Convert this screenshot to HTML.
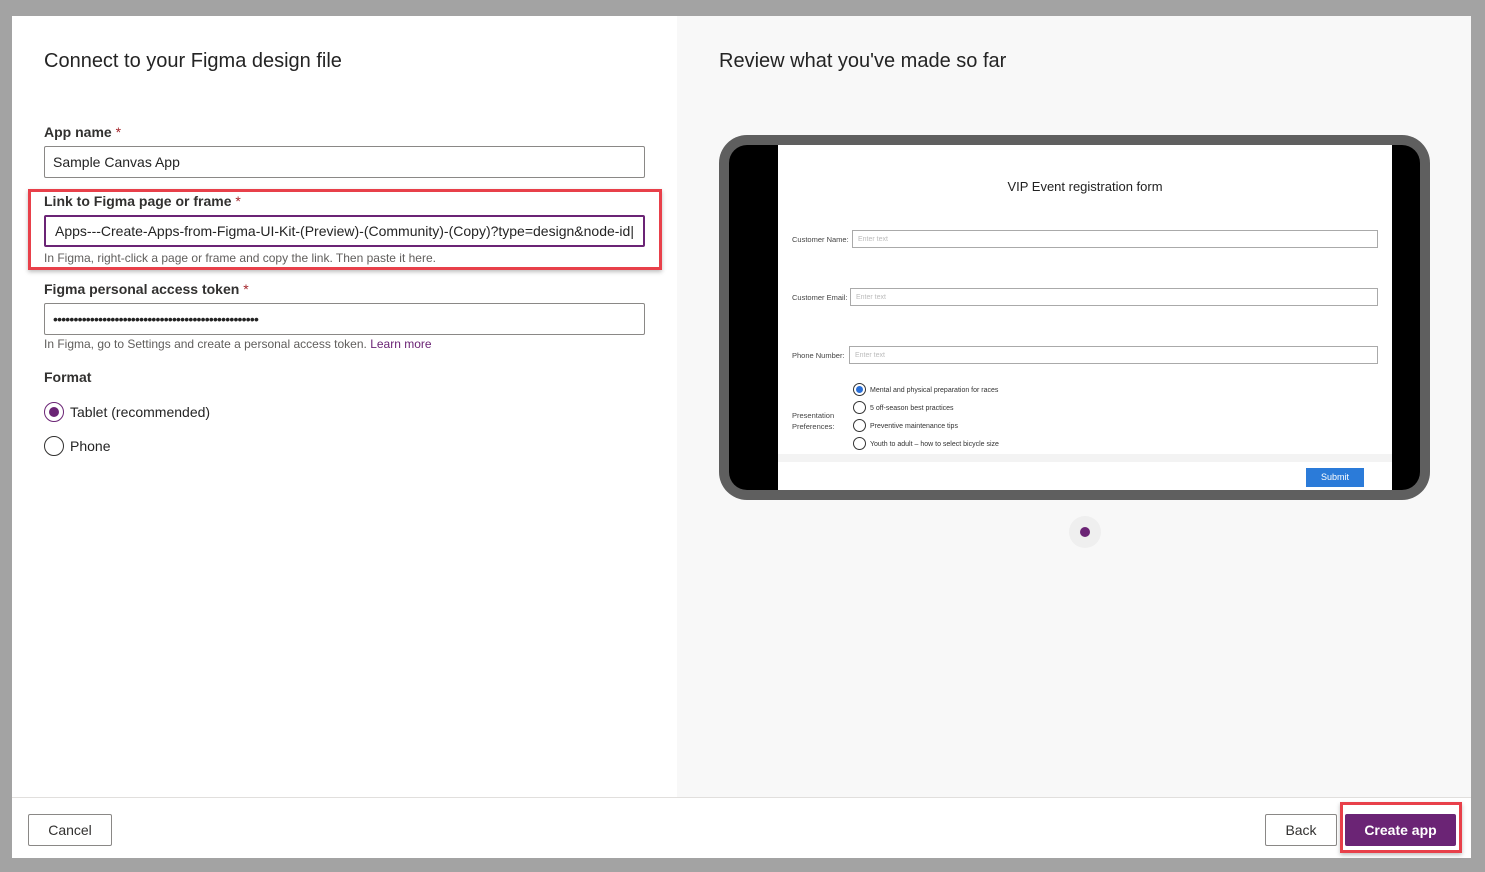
<!DOCTYPE html>
<html><head><style>
*{box-sizing:border-box;margin:0;padding:0}
body{width:1485px;height:872px;background:#a3a3a3;font-family:"Liberation Sans",sans-serif;position:relative;overflow:hidden;color:#242424}
.a{position:absolute}
.lbl{font-size:14px;font-weight:bold;color:#323130}
.lbl span{color:#a4262c;font-weight:normal}
.inp{border:1px solid #8a8886;border-radius:2px;height:32px;font-size:14px;padding:0 8px;line-height:30px;background:#fff;white-space:nowrap;overflow:hidden}
.hint{font-size:12px;color:#605e5c}
.sl{font-size:7.5px;color:#444}
.si{border:1px solid #aaa;height:18px;font-size:7px;color:#bbb;padding-left:5px;line-height:17px;background:#fff}
.rad{width:13px;height:13px;border:1px solid #333;border-radius:50%;background:#fff}
.ro{font-size:7px;color:#333}
</style></head><body>
<div class="a" style="left:12px;top:16px;width:1459px;height:842px;background:#fff"></div>
<div class="a" style="left:677px;top:16px;width:794px;height:781px;background:#f8f8f8"></div>
<div class="a" style="left:12px;top:797px;width:1459px;height:1px;background:#e1dfdd"></div>

<div class="a" style="left:44px;top:50px;font-size:20px;color:#242424">Connect to your Figma design file</div>
<div class="a" style="left:719px;top:50px;font-size:20px;color:#242424">Review what you've made so far</div>

<div class="a lbl" style="left:44px;top:124px">App name <span>*</span></div>
<div class="a inp" style="left:44px;top:146px;width:601px">Sample Canvas App</div>

<div class="a" style="left:28px;top:189px;width:634px;height:81px;border:3px solid #e8404a;box-shadow:0 2px 4px rgba(0,0,0,.25)"></div>
<div class="a lbl" style="left:44px;top:193px">Link to Figma page or frame <span>*</span></div>
<div class="a inp" style="left:44px;top:215px;width:601px;border:2px solid #6b2475;line-height:29px;padding-left:9px">Apps---Create-Apps-from-Figma-UI-Kit-(Preview)-(Community)-(Copy)?type=design&amp;node-id|</div>
<div class="a hint" style="left:44px;top:251px">In Figma, right-click a page or frame and copy the link. Then paste it here.</div>

<div class="a lbl" style="left:44px;top:281px">Figma personal access token <span>*</span></div>
<div class="a inp" style="left:44px;top:303px;width:601px;font-size:14px;letter-spacing:-0.8px">••••••••••••••••••••••••••••••••••••••••••••••••••</div>
<div class="a hint" style="left:44px;top:337px">In Figma, go to Settings and create a personal access token. <span style="color:#6b2475">Learn more</span></div>

<div class="a lbl" style="left:44px;top:369px">Format</div>
<div class="a" style="left:44px;top:402px;width:20px;height:20px;border:1px solid #6b2475;border-radius:50%"><div style="margin:4px;width:10px;height:10px;border-radius:50%;background:#6b2475"></div></div>
<div class="a" style="left:70px;top:404px;font-size:14px">Tablet (recommended)</div>
<div class="a" style="left:44px;top:436px;width:20px;height:20px;border:1px solid #323130;border-radius:50%"></div>
<div class="a" style="left:70px;top:438px;font-size:14px">Phone</div>

<!-- tablet -->
<div class="a" style="left:719px;top:135px;width:711px;height:365px;background:#5f5f5f;border-radius:28px"></div>
<div class="a" style="left:729px;top:145px;width:691px;height:345px;background:#000;border-radius:18px"></div>
<div class="a" style="left:778px;top:145px;width:614px;height:345px;background:#fff"></div>
<div class="a" style="left:778px;top:454px;width:614px;height:8px;background:#f3f3f3"></div>
<div class="a" style="left:778px;top:179px;width:614px;text-align:center;font-size:13px;color:#222">VIP Event registration form</div>
<div class="a sl" style="left:792px;top:235px">Customer Name:</div>
<div class="a si" style="left:852px;top:230px;width:526px">Enter text</div>
<div class="a sl" style="left:792px;top:293px">Customer Email:</div>
<div class="a si" style="left:850px;top:288px;width:528px">Enter text</div>
<div class="a sl" style="left:792px;top:351px">Phone Number:</div>
<div class="a si" style="left:849px;top:346px;width:529px">Enter text</div>
<div class="a sl" style="left:792px;top:410px;line-height:11px">Presentation<br>Preferences:</div>
<div class="a rad" style="left:853px;top:383px;border-color:#333"><div style="margin:2px;width:7px;height:7px;border-radius:50%;background:#2a6fd6"></div></div>
<div class="a ro" style="left:870px;top:387px">Mental and physical preparation for races</div>
<div class="a rad" style="left:853px;top:401px"></div>
<div class="a ro" style="left:870px;top:405px">5 off-season best practices</div>
<div class="a rad" style="left:853px;top:419px"></div>
<div class="a ro" style="left:870px;top:423px">Preventive maintenance tips</div>
<div class="a rad" style="left:853px;top:437px"></div>
<div class="a ro" style="left:870px;top:441px">Youth to adult – how to select bicycle size</div>
<div class="a" style="left:1306px;top:468px;width:58px;height:19px;background:#2b7bd9;color:#fff;font-size:9px;text-align:center;line-height:19px">Submit</div>

<div class="a" style="left:1069px;top:516px;width:32px;height:32px;border-radius:50%;background:#efefef"></div>
<div class="a" style="left:1080px;top:527px;width:10px;height:10px;border-radius:50%;background:#6b2475"></div>

<div class="a" style="left:28px;top:814px;width:84px;height:32px;border:1px solid #8a8886;border-radius:2px;font-size:14px;text-align:center;line-height:30px;color:#323130">Cancel</div>
<div class="a" style="left:1265px;top:814px;width:72px;height:32px;border:1px solid #8a8886;border-radius:2px;font-size:14px;text-align:center;line-height:30px;color:#323130">Back</div>
<div class="a" style="left:1340px;top:802px;width:122px;height:51px;border:3px solid #e8404a;box-shadow:0 2px 4px rgba(0,0,0,.25)"></div>
<div class="a" style="left:1345px;top:814px;width:111px;height:32px;background:#6b2475;border-radius:2px;font-size:14px;font-weight:bold;color:#fff;text-align:center;line-height:32px">Create app</div>
</body></html>
